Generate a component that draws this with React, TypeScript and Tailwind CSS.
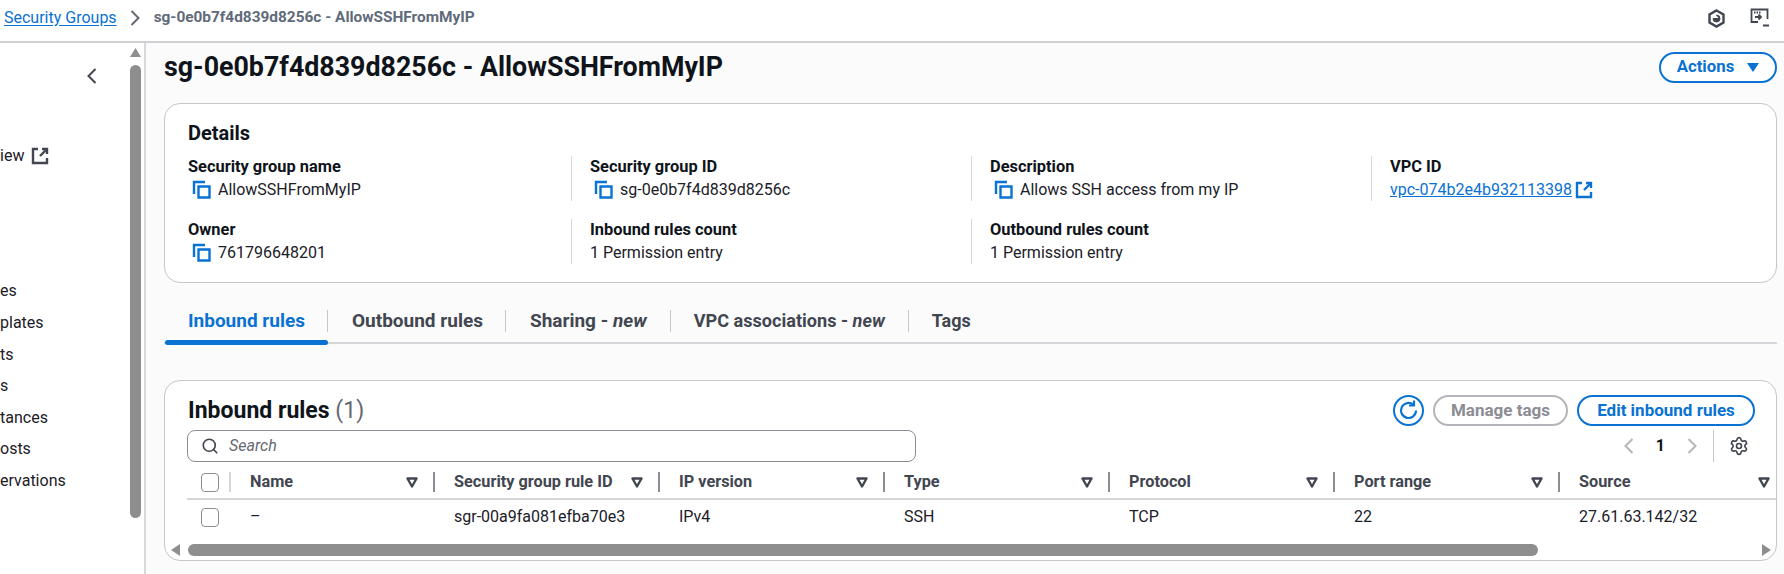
import React from "react";
import { Search, Settings } from "lucide-react";

const Copy = () => (
  <svg width="19" height="19" viewBox="0 0 19 19" fill="none" className="shrink-0 text-[#0972d3]" stroke="currentColor" strokeWidth="2.4">
    <path d="M2 14V2h11" />
    <path d="M6.5 6.5h11v11h-11z" />
  </svg>
);

const External = ({ className = "" }: { className?: string }) => (
  <svg width="18" height="18" viewBox="0 0 18 18" fill="none" stroke="currentColor" strokeWidth="2.4" className={className}>
    <path d="M7 2H2v14h14v-5" />
    <path d="M11 2h5v5" />
    <path d="M16 2 9 9" />
  </svg>
);

const Sort = () => (
  <svg width="12" height="11" viewBox="0 0 12 11" fill="none" stroke="#424650" strokeWidth="2.4" strokeLinejoin="round" className="shrink-0">
    <path d="M1.5 1.5h9L6 9.5z" />
  </svg>
);

const ChevL = ({ className = "" }: { className?: string }) => (
  <svg width="10" height="16" viewBox="0 0 10 16" fill="none" stroke="currentColor" strokeWidth="2" className={className}>
    <path d="M8.5 1 1.5 8l7 7" />
  </svg>
);

const ChevR = ({ className = "" }: { className?: string }) => (
  <svg width="10" height="16" viewBox="0 0 10 16" fill="none" stroke="currentColor" strokeWidth="2" className={className}>
    <path d="M1.5 1 8.5 8l-7 7" />
  </svg>
);

const Check = () => <span className="block w-[18px] h-[19px] rounded-[4px] border border-[#8c8c94] bg-white" />;

const sideItems = [
  { t: "es", y: "mt-[113px]" },
  { t: "plates", y: "mt-[10px]" },
  { t: "ts", y: "mt-[10px]" },
  { t: "s", y: "mt-[9px]" },
  { t: "tances", y: "mt-[10px]" },
  { t: "osts", y: "mt-[9px]" },
  { t: "ervations", y: "mt-[10px]" },
];

const Field = ({ label, value, copy, first }: { label: string; value: React.ReactNode; copy?: boolean; first?: boolean }) => (
  <div className={first ? "h-[45px]" : "h-[45px] border-l border-[#d5d5da] pl-[18px]"}>
    <div className="h-[22px] leading-[22px] text-[16.4px] font-bold text-[#0f141a]">{label}</div>
    <div className="h-[23px] leading-[23px] flex items-center gap-[7px] text-[#1b2028]">
      {copy && <span className="ml-[4px] flex"><Copy /></span>}
      {value}
    </div>
  </div>
);

const tabs: { label: string; suffix?: boolean; cls: string }[] = [
  { label: "Outbound rules", cls: "pl-[24px] pr-[22px]" },
  { label: "Sharing", suffix: true, cls: "pl-[24px] pr-[23px]" },
  { label: "VPC associations", suffix: true, cls: "pl-[23px] pr-[23px] text-[18.1px]" },
  { label: "Tags", cls: "pl-[23px] text-[18px]" },
];

const cols = [
  { h: "Name", v: "–" },
  { h: "Security group rule ID", v: "sgr-00a9fa081efba70e3" },
  { h: "IP version", v: "IPv4" },
  { h: "Type", v: "SSH" },
  { h: "Protocol", v: "TCP" },
  { h: "Port range", v: "22" },
  { h: "Source", v: "27.61.63.142/32" },
];

const grid = "grid grid-cols-[44px_204px_225px_225px_225px_225px_225px_1fr]";

export default function App() {
  return (
    <div className="w-[1784px] h-[574px] overflow-hidden bg-white flex flex-col text-[16px] font-['Roboto','Liberation_Sans',sans-serif]">
      <header className="h-[43px] shrink-0 border-b-2 border-[#cfcfd4] flex items-center pb-[5px] pl-[4px]">
        <a className="text-[#0972d3] underline underline-offset-2 leading-[24px]">Security Groups</a>
        <ChevR className="ml-[13px] text-[#656871]" />
        <span className="ml-[14px] text-[15.4px] font-bold text-[#5f6b7a]">sg-0e0b7f4d839d8256c - AllowSSHFromMyIP</span>
        <div className="ml-auto flex items-center gap-[24px] pr-[14px] text-[#424650]">
          <svg width="19" height="19" viewBox="0 0 19 19" fill="none" stroke="currentColor" strokeWidth="2.4">
            <path d="M9.5 1.5 16.5 5.5v8l-7 4-7-4v-8z" />
            <path d="M6 9.5a3.5 3.5 0 1 0 3.5-3.5l3 3.5z" fill="currentColor" strokeWidth="1" />
          </svg>
          <svg width="20" height="20" viewBox="0 0 20 20" fill="none" stroke="currentColor" strokeWidth="1.8">
            <path d="M8 14H1.5V1.5h16V11" />
            <path d="M4 4.5h7" strokeDasharray="1.5 1" strokeWidth="2" />
            <path d="M5 9h6M8.5 6.5 11 9l-2.5 2.5" />
            <path d="M13 17.5h6" strokeWidth="2" />
          </svg>
        </div>
      </header>

      <div className="flex-1 flex min-h-0">
        <aside className="w-[146px] shrink-0 border-r-2 border-[#d9d9dd] flex">
          <nav className="w-[130px] overflow-hidden text-[#1b2028] text-[16px] leading-[22px]">
            <div className="flex justify-end pr-[33px] mt-[25px] h-[16px] text-[#424650]">
              <ChevL />
            </div>
            <div className="flex items-center gap-[7px] mt-[61px] text-[#1b2028]">
              <span>iew</span>
              <External className="text-[#424650]" />
            </div>
            {sideItems.map((s) => (
              <div key={s.t} className={s.y}>{s.t}</div>
            ))}
          </nav>
          <div className="w-[11px] flex flex-col items-center pt-[5px]">
            <svg width="11" height="9" viewBox="0 0 11 9" fill="#8e8e8e"><path d="M5.5 0 11 9H0z" /></svg>
            <div className="mt-[8px] w-[11px] h-[453px] rounded-full bg-[#8e8e8e]" />
          </div>
        </aside>

        <main className="flex-1 min-w-0 bg-[#fbfbfb] pl-[18px] pr-[7px] pt-[9px] text-[#1b2028]">
          <div className="flex items-center justify-between h-[30px]">
            <h1 className="text-[26.8px] font-bold text-[#0f141a] leading-[30px]">sg-0e0b7f4d839d8256c - AllowSSHFromMyIP</h1>
            <button className="w-[118px] h-[31px] rounded-full border-2 border-[#0972d3] text-[#0972d3] text-[16.8px] font-bold flex items-center justify-center gap-[13px] bg-white">
              Actions
              <svg width="12" height="9" viewBox="0 0 12 9" fill="currentColor"><path d="M0 0h12L6 9z" /></svg>
            </button>
          </div>

          <section className="mt-[21px] h-[180px] rounded-[16px] border border-[#c6c6cd] bg-white pl-[23px] pt-[15px]">
            <h2 className="text-[20px] font-bold text-[#0f141a] leading-[28px]">Details</h2>
            <div className="mt-[9px] grid grid-cols-[383px_400px_400px_1fr] gap-y-[18px]">
              <Field first label="Security group name" value="AllowSSHFromMyIP" copy />
              <Field label="Security group ID" value="sg-0e0b7f4d839d8256c" copy />
              <Field label="Description" value="Allows SSH access from my IP" copy />
              <Field
                label="VPC ID"
                value={
                  <a className="text-[#0972d3] flex items-center gap-[3px]">
                    <span className="underline">vpc-074b2e4b932113398</span>
                    <External />
                  </a>
                }
              />
              <Field first label="Owner" value="761796648201" copy />
              <Field label="Inbound rules count" value="1 Permission entry" />
              <Field label="Outbound rules count" value="1 Permission entry" />
            </div>
          </section>

          <div className="mt-[20px] h-[41px] border-b-2 border-[#d5d5da] flex pl-[1px] text-[19px] font-bold text-[#424650]">
            <div className="relative h-[40px] pb-[4px] flex items-center">
              <div className="pl-[23px] pr-[22px] h-[22px] leading-[22px] border-r border-[#c6c6cd] text-[#0972d3]">Inbound rules</div>
              <span className="absolute left-0 right-0 bottom-[-2px] h-[5px] rounded-full bg-[#0972d3]" />
            </div>
            {tabs.map((t, i) => (
              <div key={t.label} className="h-[40px] pb-[4px] flex items-center">
                <div className={`${t.cls} h-[22px] leading-[22px] ${i < 3 ? "border-r border-[#c6c6cd]" : ""}`}>
                  {t.label}
                  {t.suffix && (
                    <span> - <em className="italic">new</em></span>
                  )}
                </div>
              </div>
            ))}
          </div>

          <section className="mt-[36px] h-[181px] rounded-[16px] border border-[#c6c6cd] bg-white overflow-hidden">
            <div className="flex items-center justify-between pt-[14px] pl-[23px] pr-[21px]">
              <h2 className="text-[23px] font-bold text-[#0f141a] leading-[31px]">
                Inbound rules <span className="font-normal text-[#656871]">(1)</span>
              </h2>
              <div className="flex items-center">
                <span className="w-[31px] h-[31px] rounded-full border-2 border-[#0972d3] text-[#0972d3] flex items-center justify-center bg-white">
                  <svg width="23" height="23" viewBox="0 0 23 23" fill="none" stroke="currentColor" strokeWidth="2.2">
                    <path d="M19 11.5a7.5 7.5 0 1 1-3-6" />
                    <path d="M17 1.5v5h-5" />
                  </svg>
                </span>
                <button className="ml-[9px] w-[135px] h-[31px] rounded-full border-2 border-[#b4b4bb] text-[#8c8c94] text-[17px] font-bold bg-white">Manage tags</button>
                <button className="ml-[9px] w-[178px] h-[31px] rounded-full border-2 border-[#0972d3] text-[#0972d3] text-[17px] font-bold bg-white">Edit inbound rules</button>
              </div>
            </div>

            <div className="mt-[4px] flex items-center pl-[22px] pr-[27px]">
              <div className="w-[729px] h-[32px] rounded-[8px] border border-[#8c8c94] bg-white flex items-center pl-[13px] gap-[10px]">
                <Search size={18} strokeWidth={2.2} className="text-[#424650]" />
                <span className="italic text-[#656871]">Search</span>
              </div>
              <div className="ml-auto flex items-center h-[32px] text-[#b4b4bb]">
                <ChevL />
                <span className="ml-[22px] mr-[22px] font-bold text-[#0f141a]">1</span>
                <ChevR />
                <span className="ml-[16px] h-[32px] border-l border-[#c6c6cd]" />
                <Settings size={20} strokeWidth={2} className="ml-[15px] text-[#424650]" />
              </div>
            </div>

            <div className={`${grid} mt-[4px] ml-[22px] h-[34px] items-center border-b-2 border-[#d5d5da] text-[16.3px] font-bold text-[#424650]`}>
              <div className="h-[20px] pl-[14px] border-r-2 border-[#d5d5da] flex items-center"><Check /></div>
              {cols.map((c, i) => (
                <div
                  key={c.h}
                  className={`h-[20px] flex items-center justify-between pl-[19px] ${i < 6 ? "pr-[15px] border-r-2 border-[#8c8c94]" : "pr-[6px]"}`}
                >
                  <span>{c.h}</span>
                  <Sort />
                </div>
              ))}
            </div>

            <div className={`${grid} ml-[22px] h-[34px] items-center text-[#1b2028]`}>
              <div className="pl-[14px] flex"><Check /></div>
              {cols.map((c) => (
                <div key={c.h} className="pl-[19px]">{c.v}</div>
              ))}
            </div>

            <div className="mt-[10px] flex items-center h-[12px] pl-[6px] pr-[5px]">
              <svg width="9" height="12" viewBox="0 0 9 12" fill="#8e8e8e"><path d="M0 6 9 0v12z" /></svg>
              <div className="ml-[8px] w-[1350px] h-[12px] rounded-full bg-[#8e8e8e]" />
              <svg className="ml-auto" width="9" height="12" viewBox="0 0 9 12" fill="#8e8e8e"><path d="M9 6 0 0v12z" /></svg>
            </div>
          </section>
        </main>
      </div>
    </div>
  );
}
